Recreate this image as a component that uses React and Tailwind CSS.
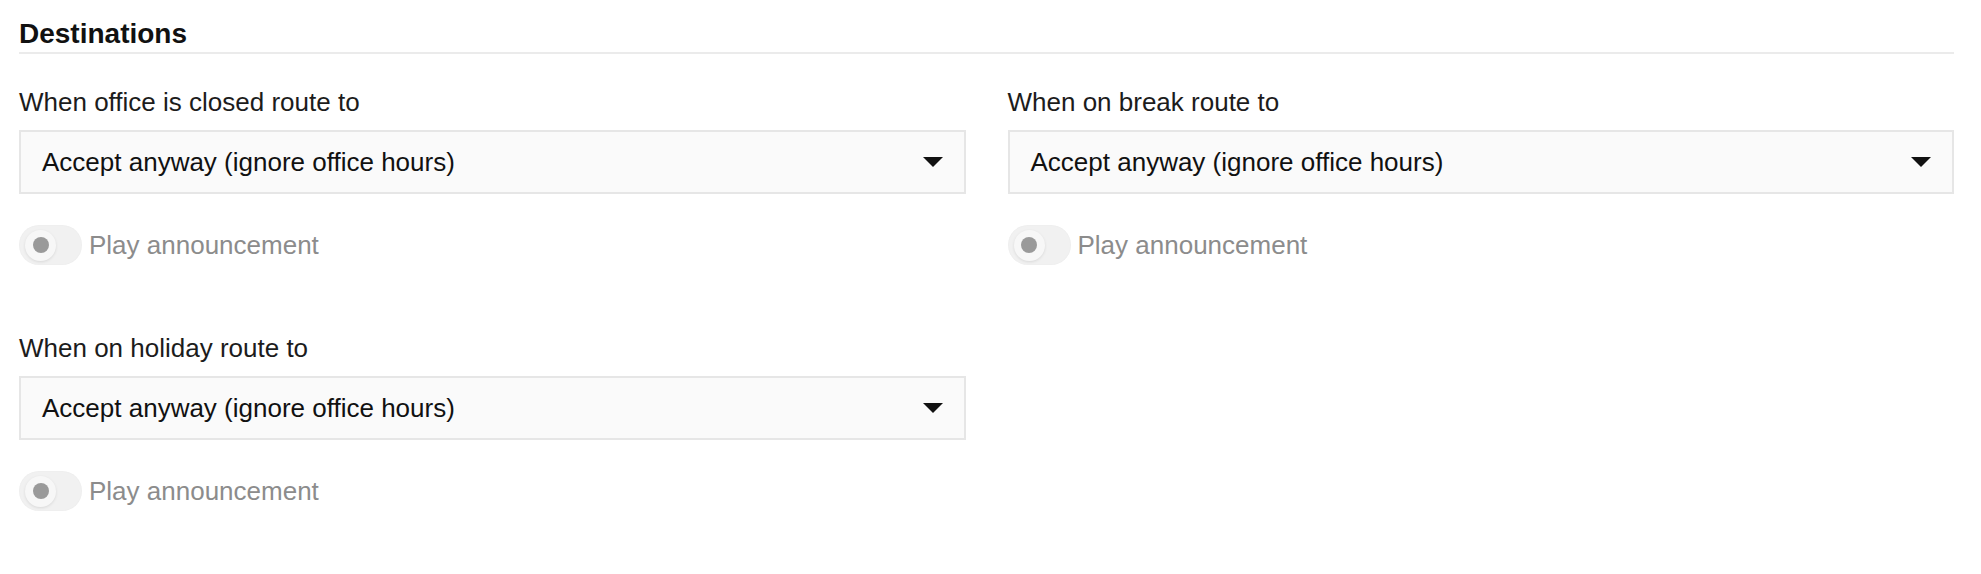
import { useState } from 'react';

const ROUTES = [
  { id: 'closed', label: 'When office is closed route to' },
  { id: 'break', label: 'When on break route to' },
  { id: 'holiday', label: 'When on holiday route to' },
];

function Toggle({ on, onChange }) {
  return (
    <button
      type="button"
      onClick={() => onChange(!on)}
      className="relative w-[63px] h-[40px] rounded-full bg-[#f1f1f1] shadow-[inset_0_0_2px_rgba(0,0,0,0.04)] flex items-center px-[6px] shrink-0"
    >
      <span className="w-[31px] h-[31px] rounded-full bg-[#f7f7f7] shadow-[0_1px_3px_rgba(0,0,0,0.1)] flex items-center justify-center">
        <span className="w-[16px] h-[16px] rounded-full bg-[#9a9a9a]" />
      </span>
    </button>
  );
}

function RouteField({ label }) {
  const [play, setPlay] = useState(false);
  return (
    <div>
      <p className="text-[26px] leading-[30px] text-[#1c1c1c] mb-[13px]">{label}</p>
      <div className="h-[64px] border-2 border-[#e6e6e6] bg-[#fafafa] flex items-center justify-between pl-[21px] pr-[21px]">
        <span className="text-[26px] leading-[30px] text-[#111]">Accept anyway (ignore office hours)</span>
        <svg width="20" height="10" viewBox="0 0 20 10" className="shrink-0">
          <path d="M0 0h20L10 10z" fill="#111" />
        </svg>
      </div>
      <div className="mt-[31px] flex items-center gap-[7px]">
        <Toggle on={play} onChange={setPlay} />
        <span className="text-[26px] leading-[30px] text-[#8c8c8c]">Play announcement</span>
      </div>
    </div>
  );
}

export default function App() {
  return (
    <div className="bg-white min-h-[574px] pl-[19px] pr-[27px] pt-[18px] font-['Liberation_Sans',Arial,sans-serif]">
      <h2 className="text-[28px] leading-[32px] font-bold text-[#111] pb-[2px] border-b-2 border-[#ebebeb]">
        Destinations
      </h2>
      <div className="grid grid-cols-2 gap-x-[42px] gap-y-[68px] pt-[33px]">
        {ROUTES.map((r) => (
          <RouteField key={r.id} label={r.label} />
        ))}
      </div>
    </div>
  );
}
